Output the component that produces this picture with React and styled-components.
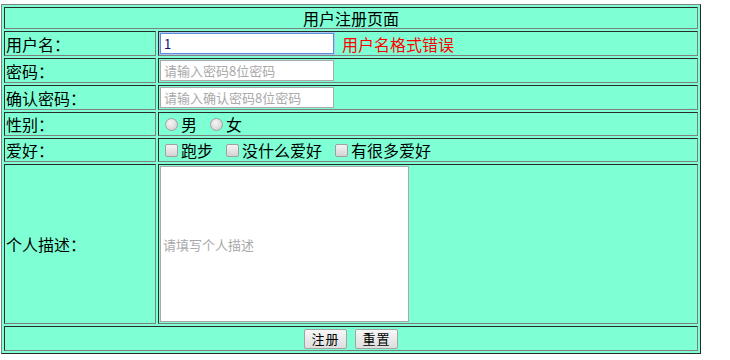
import React from "react";
import styled, { createGlobalStyle } from "styled-components";

const GlobalStyle = createGlobalStyle`
  html, body {
    margin: 0;
    padding: 0;
    background: #ffffff;
  }
  body {
    font-family: "Noto Sans CJK SC", "Liberation Sans", sans-serif;
    font-size: 16px;
    color: #000;
  }
`;

const Page = styled.div`
  padding: 4px 0 0 1px;
`;

const FormTable = styled.table`
  width: 700px;
  border-collapse: separate;
  border-spacing: 2px;
  background: #7fffd4;
  border: 1px solid;
  border-color: #808080 #2a2a2a #2a2a2a #808080;
  box-sizing: border-box;
`;

const Cell = styled.td`
  box-sizing: border-box;
  border: 1px solid;
  border-color: #2a2a2a #808080 #808080 #2a2a2a;
  padding: 1px;
  height: ${(p) => p.$h}px;
  font-size: 16px;
  line-height: 18px;
  vertical-align: middle;
  white-space: nowrap;
`;

const TitleCell = styled(Cell)`
  text-align: center;
`;

const LabelCell = styled(Cell)`
  width: 152px;
  text-align: left;
`;

const FieldCell = styled(Cell)`
  text-align: left;
`;

const ActionCell = styled(Cell)`
  text-align: center;
`;

const FieldLine = styled.div`
  display: flex;
  align-items: center;
`;

const TextInput = styled.input`
  box-sizing: border-box;
  width: 174px;
  height: 21px;
  margin: 0;
  padding: 1px 3px;
  border: 1px solid #a9a9a9;
  background: #fff;
  font-family: "Noto Sans CJK SC", "Liberation Sans", sans-serif;
  font-size: 13px;
  line-height: 17px;
  color: #10106a;
  outline: none;
  ${(p) =>
    p.$focused &&
    `
    border: 1px solid #5b8fd9;
    box-shadow: 0 0 0 1px #a9c7ef;
  `}
  &::placeholder {
    color: #a9a9a9;
  }
`;

const ErrorText = styled.span`
  margin-left: 8px;
  color: #ff0000;
  font-size: 16px;
`;

const Options = styled.div`
  display: flex;
  align-items: center;
  gap: 8px;
`;

const Option = styled.label`
  display: inline-flex;
  align-items: center;
  font-size: 16px;
  line-height: 18px;
`;

const Radio = styled.input.attrs({ type: "radio" })`
  appearance: none;
  box-sizing: border-box;
  width: 13px;
  height: 13px;
  margin: 0 3px 0 5px;
  border: 1px solid #a0a0a0;
  border-radius: 50%;
  background: radial-gradient(circle at 40% 35%, #f6f6f6 0%, #dedede 55%, #c8c8c8 100%);
`;

const CheckBox = styled.input.attrs({ type: "checkbox" })`
  appearance: none;
  box-sizing: border-box;
  width: 13px;
  height: 13px;
  margin: 0 3px 0 5px;
  border: 1px solid #a0a0a0;
  border-radius: 2px;
  background: linear-gradient(#f4f4f4, #d4d4d4);
`;

const DescInput = styled.input`
  box-sizing: border-box;
  width: 249px;
  height: 156px;
  margin: 0;
  padding: 1px 2px;
  border: 1px solid #a9a9a9;
  background: #fff;
  font-family: "Noto Sans CJK SC", "Liberation Sans", sans-serif;
  font-size: 13px;
  outline: none;
  display: block;
  &::placeholder {
    color: #a9a9a9;
  }
`;

const ButtonRow = styled.div`
  display: flex;
  justify-content: center;
  gap: 8px;
`;

const Button = styled.button`
  box-sizing: border-box;
  width: 43px;
  height: 20px;
  margin: 0;
  padding: 0;
  border: 1px solid #a3a3a3;
  border-radius: 2px;
  background: linear-gradient(#f7f7f7, #dedede);
  font-family: "Noto Sans CJK SC", "Liberation Sans", sans-serif;
  font-size: 13px;
  letter-spacing: 1px;
  line-height: 16px;
  color: #000;
`;

export default function App() {
  return (
    <Page>
      <GlobalStyle />
      <FormTable>
        <tbody>
          <tr>
            <TitleCell colSpan={2} $h={22}>用户注册页面</TitleCell>
          </tr>
          <tr>
            <LabelCell $h={25}>用户名：</LabelCell>
            <FieldCell $h={25}>
              <FieldLine>
                <TextInput $focused defaultValue="1" />
                <ErrorText>用户名格式错误</ErrorText>
              </FieldLine>
            </FieldCell>
          </tr>
          <tr>
            <LabelCell $h={25}>密码：</LabelCell>
            <FieldCell $h={25}>
              <FieldLine>
                <TextInput type="password" placeholder="请输入密码8位密码" />
              </FieldLine>
            </FieldCell>
          </tr>
          <tr>
            <LabelCell $h={25}>确认密码：</LabelCell>
            <FieldCell $h={25}>
              <FieldLine>
                <TextInput type="password" placeholder="请输入确认密码8位密码" />
              </FieldLine>
            </FieldCell>
          </tr>
          <tr>
            <LabelCell $h={24}>性别：</LabelCell>
            <FieldCell $h={24}>
              <Options>
                <Option>
                  <Radio name="sex" />男
                </Option>
                <Option>
                  <Radio name="sex" />女
                </Option>
              </Options>
            </FieldCell>
          </tr>
          <tr>
            <LabelCell $h={24}>爱好：</LabelCell>
            <FieldCell $h={24}>
              <Options>
                <Option>
                  <CheckBox />跑步
                </Option>
                <Option>
                  <CheckBox />没什么爱好
                </Option>
                <Option>
                  <CheckBox />有很多爱好
                </Option>
              </Options>
            </FieldCell>
          </tr>
          <tr>
            <LabelCell $h={160}>个人描述：</LabelCell>
            <FieldCell $h={160}>
              <DescInput placeholder="请填写个人描述" />
            </FieldCell>
          </tr>
          <tr>
            <ActionCell colSpan={2} $h={25}>
              <ButtonRow>
                <Button type="button">注册</Button>
                <Button type="button">重置</Button>
              </ButtonRow>
            </ActionCell>
          </tr>
        </tbody>
      </FormTable>
    </Page>
  );
}
